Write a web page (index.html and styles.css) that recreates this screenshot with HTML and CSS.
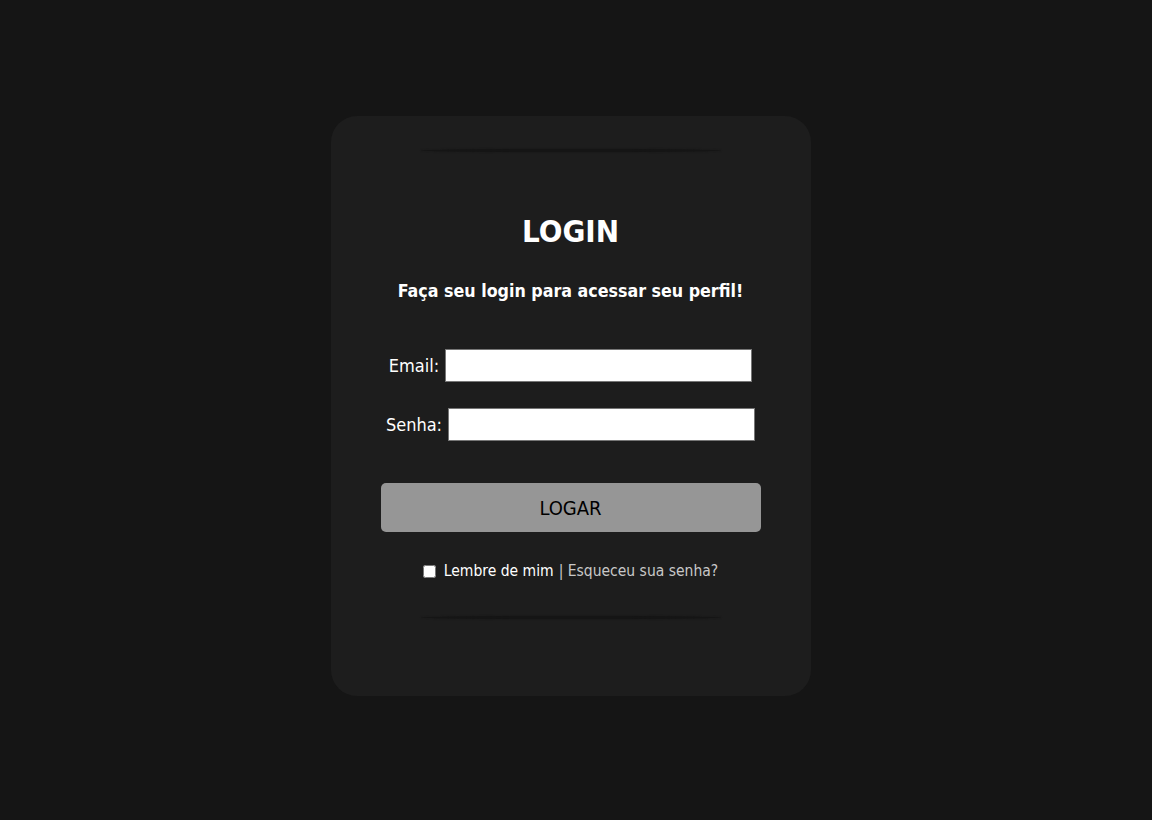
FILE: index.html
```html
<!DOCTYPE html>
<html lang="pt-BR">
<head>
<meta charset="utf-8">
<title>Login</title>
<link rel="stylesheet" href="styles.css">
</head>
<body>
<main class="page">
  <section class="card">
    <div class="rule"></div>
    <h1 class="title">LOGIN</h1>
    <p class="subtitle">Faça seu login para acessar seu perfil!</p>
    <form class="form">
      <div class="field"><label for="email">Email:</label><input id="email" type="text"></div>
      <div class="field"><label for="senha">Senha:</label><input id="senha" type="password"></div>
      <button type="button" class="btn">LOGAR</button>
      <div class="extra">
        <input type="checkbox" class="check" id="lembre">
        <label for="lembre" class="remember">Lembre de mim</label>
        <span class="forgot">| Esqueceu sua senha?</span>
      </div>
    </form>
    <div class="rule bottom"></div>
  </section>
</main>
</body>
</html>
```
FILE: styles.css
```css
html, body {
  margin: 0;
  padding: 0;
  background: #151515;
  height: 100%;
}
.page {
  display: flex;
  justify-content: center;
  align-items: flex-start;
  padding: 116px 11px 0 0;
  font-family: "DejaVu Sans Condensed", "DejaVu Sans", sans-serif;
  color: #fff;
}
.card {
  width: 480px;
  height: 580px;
  box-sizing: border-box;
  background: #1d1d1d;
  border-radius: 26px;
  padding-top: 33px;
  display: flex;
  flex-direction: column;
  align-items: center;
}
.rule {
  width: 300px;
  height: 3px;
  background: #151515;
  border-radius: 50%;
  box-shadow: 0 0 2px #161616;
}
.rule.bottom {
  margin-top: 36px;
}
.title {
  margin: 60px 0 0;
  font-size: 31px;
  line-height: 38px;
  font-weight: bold;
}
.subtitle {
  margin: 29px 0 0;
  font-size: 17.7px;
  line-height: 24px;
  font-weight: bold;
}
.form {
  display: flex;
  flex-direction: column;
  align-items: center;
  margin-top: 46px;
}
.field {
  display: flex;
  align-items: center;
  gap: 6px;
  margin-bottom: 26px;
  font-size: 18px;
}
.field input {
  width: 307px;
  height: 33px;
  box-sizing: border-box;
  border: 1px solid #767676;
  background: #fff;
  margin: 0;
}
.btn {
  margin-top: 16px;
  width: 380px;
  height: 49px;
  background: #969696;
  border: none;
  border-radius: 5px;
  font-family: "DejaVu Sans Condensed", "DejaVu Sans", sans-serif;
  font-size: 20px;
  color: #000;
}
.extra {
  margin-top: 30px;
  display: flex;
  align-items: center;
  font-size: 15.5px;
}
.check {
  width: 13px;
  height: 13px;
  margin: 0 8px 0 0;
}
.remember {
  color: #fff;
}
.forgot {
  color: #c8c8c8;
  margin-left: 5px;
}
```
